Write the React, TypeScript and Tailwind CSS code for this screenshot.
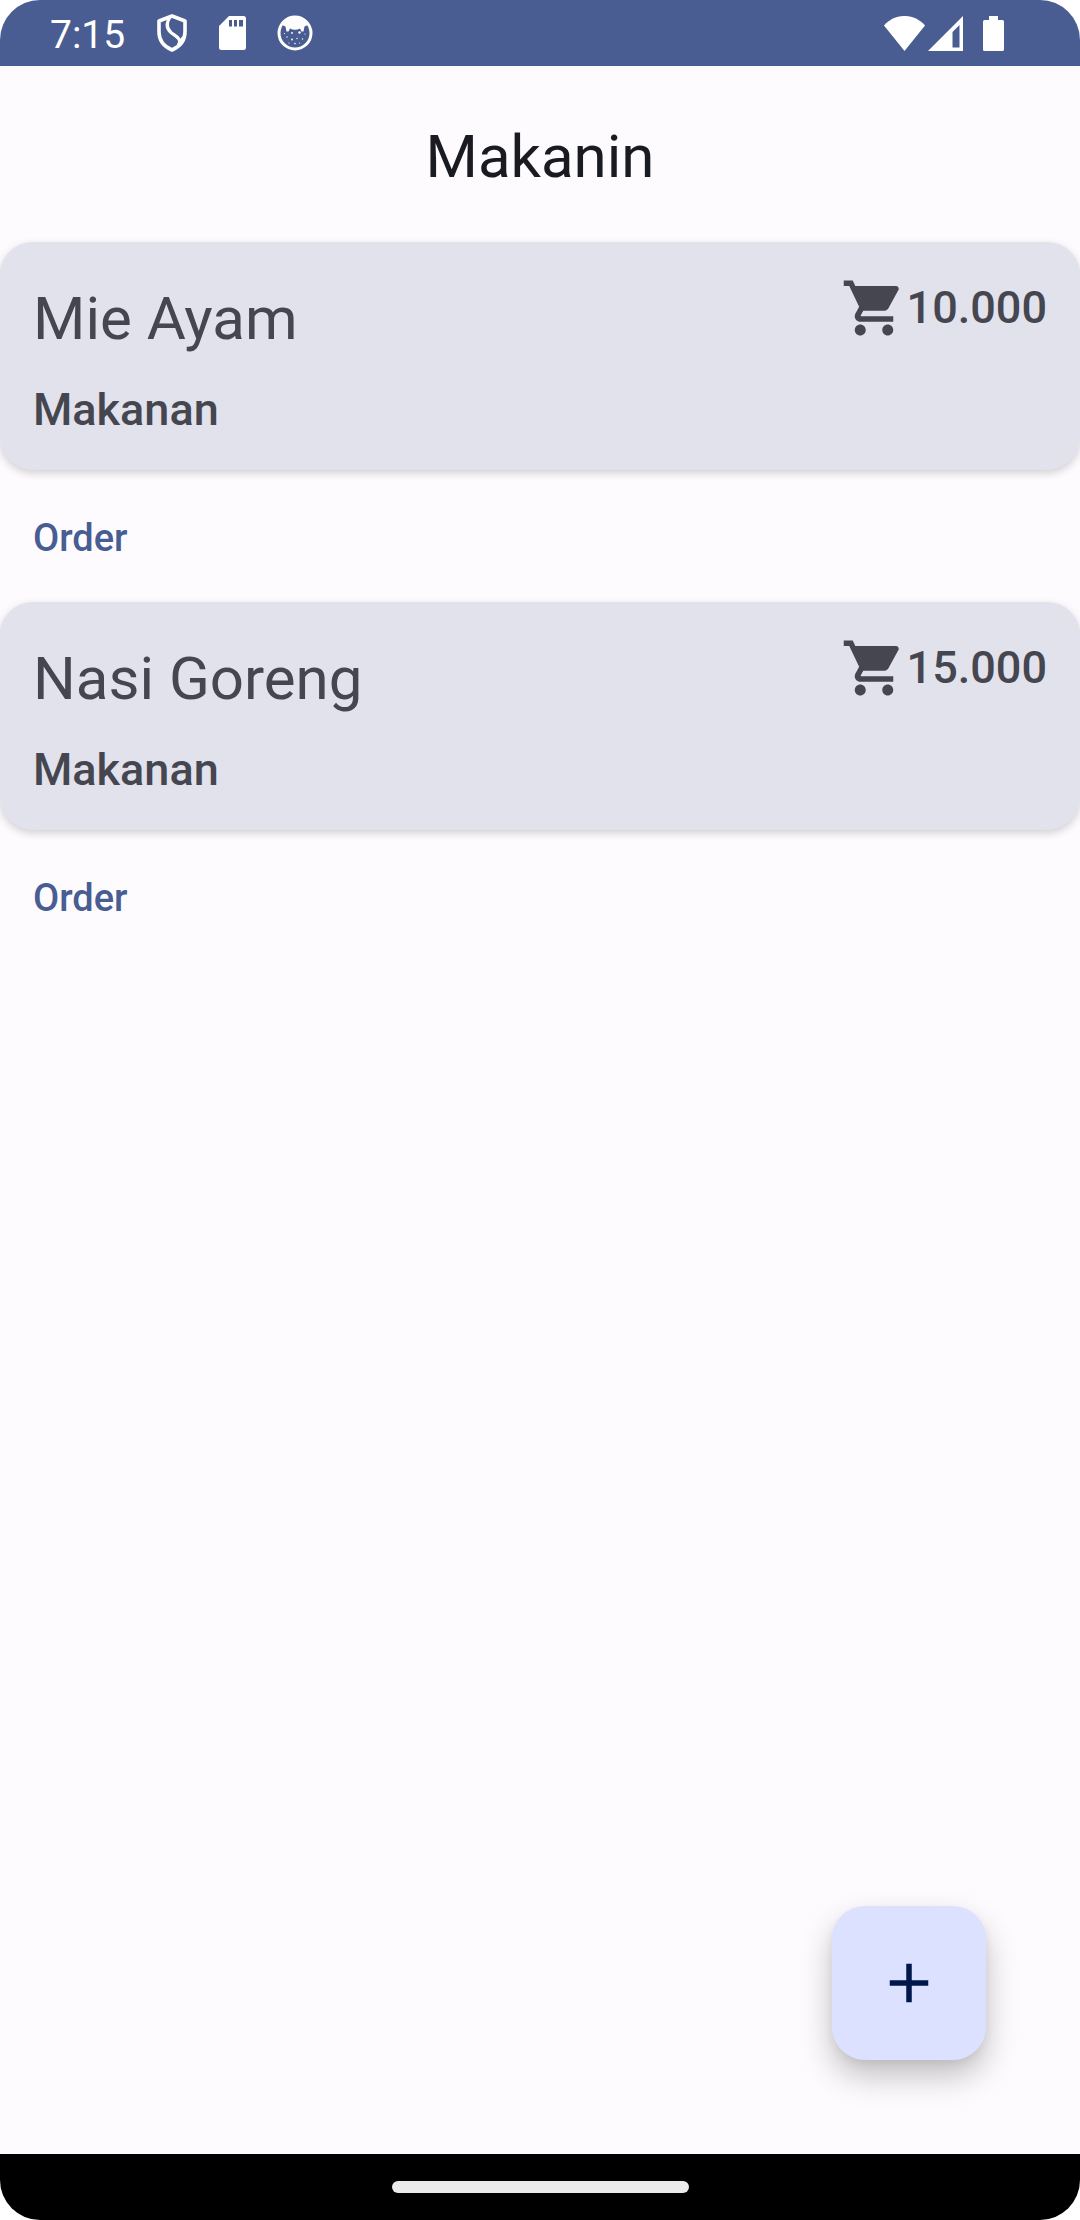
type MenuItem = { name: string; category: string; price: string };

const items: MenuItem[] = [
  { name: "Mie Ayam", category: "Makanan", price: "10.000" },
  { name: "Nasi Goreng", category: "Makanan", price: "15.000" },
];

function ShieldIcon() {
  return (
    <svg className="h-[38px] w-8" viewBox="0 0 32 38" fill="none" stroke="currentColor" strokeWidth="3.600" strokeLinejoin="round" aria-hidden="true">
      <path d="M16 2 29 7V18C29 26 24 32.500 16 36 8 32.500 3 26 3 18V7Z" />
      <path d="M14 3C9.500 10 10.500 14.500 15 18.500 20 22.500 26.500 25 22.500 31" strokeWidth="3.200" />
      <path d="M27.500 23 22 32" strokeWidth="3.200" />
    </svg>
  );
}

function SdCardIcon() {
  return (
    <svg className="h-[34px] w-[27px]" viewBox="0 0 27 34" fill="currentColor" aria-hidden="true">
      <path fillRule="evenodd" d="M10 0H24.500A2.500 2.500 0 0 1 27 2.500V31.500A2.500 2.500 0 0 1 24.500 34H2.500A2.500 2.500 0 0 1 0 31.500V10ZM10 4V10.500H13V4ZM15 4V10.500H18V4ZM20 4V10.500H24V4Z" />
    </svg>
  );
}

function FaceIcon() {
  return (
    <svg className="size-9" viewBox="0 0 36 36" fill="currentColor" aria-hidden="true">
      <circle cx="18" cy="18" r="16" fill="none" stroke="currentColor" strokeWidth="3" />
      <path d="M5 10C8 4.500 13 2 18 2S28 4.500 31 10L27.500 11.500 26.500 16.500H24.500L23 13.500C20 15.200 16 15.200 13 13.500L11.500 16.500H9.500L8.500 11.500Z" />
      <g>
        <circle cx="15" cy="18" r=".9" />
        <circle cx="22.500" cy="17.500" r="1.200" />
        <circle cx="7.500" cy="18.500" r=".6" />
        <circle cx="28" cy="19" r=".6" />
        <circle cx="10" cy="22" r=".7" />
        <circle cx="15" cy="24.500" r=".9" />
        <circle cx="20" cy="23.500" r=".7" />
        <circle cx="25.500" cy="24" r=".7" />
        <circle cx="18" cy="28.500" r=".8" />
        <circle cx="22.500" cy="28" r=".6" />
        <circle cx="12" cy="28" r=".6" />
      </g>
    </svg>
  );
}

function WifiIcon() {
  return (
    <svg className="h-[35px] w-[41px]" viewBox="0 0 41 35" fill="currentColor" aria-hidden="true">
      <path d="M0 9.500C11-3.200 30-3.200 41 9.500L20.500 35Z" />
    </svg>
  );
}

function SignalIcon() {
  return (
    <svg className="size-[35px]" viewBox="0 0 35 35" fill="currentColor" aria-hidden="true">
      <path fillRule="evenodd" d="M35 0V35H0ZM31.500 9 24.500 16V31.500H31.500Z" />
    </svg>
  );
}

function BatteryIcon() {
  return (
    <svg className="h-[35px] w-[21px]" viewBox="0 0 21 35" fill="currentColor" aria-hidden="true">
      <path d="M6 0H15V4H19.500A1.500 1.500 0 0 1 21 5.500V33.500A1.500 1.500 0 0 1 19.500 35H1.500A1.500 1.500 0 0 1 0 33.500V5.500A1.500 1.500 0 0 1 1.500 4H6Z" />
    </svg>
  );
}

function CartIcon() {
  return (
    <svg className="size-[66px]" viewBox="0 0 24 24" fill="currentColor" aria-hidden="true">
      <path d="M7 18c-1.100 0-1.990.9-1.990 2S5.900 22 7 22s2-.9 2-2-.9-2-2-2zM1 2v2h2l3.600 7.590-1.350 2.450c-.16.280-.25.610-.25.960 0 1.100.9 2 2 2h12v-2H7.420c-.14 0-.25-.11-.25-.25l.03-.12.9-1.630h7.450c.75 0 1.410-.41 1.750-1.030l3.580-6.490c.08-.14.12-.31.120-.48 0-.55-.45-1-1-1H5.210l-.94-2H1zm16 16c-1.100 0-1.990.9-1.990 2s.89 2 1.990 2 2-.9 2-2-.9-2-2-2z" />
    </svg>
  );
}

function StatusBar() {
  return (
    <div className="flex h-[66px] items-center justify-between bg-[#4a5d92] pr-[76px] pl-[50px] text-white">
      <div className="flex items-center">
        <time className="mr-[31px] pt-1 text-[39px] leading-none">7:15</time>
        <div className="flex items-center gap-[31px]">
          <ShieldIcon />
          <SdCardIcon />
          <FaceIcon />
        </div>
      </div>
      <div className="flex items-center">
        <WifiIcon />
        <span className="ml-[3px] flex gap-5">
          <SignalIcon />
          <BatteryIcon />
        </span>
      </div>
    </div>
  );
}

function MenuEntry({ item }: { item: MenuItem }) {
  return (
    <li>
      <article className="flex items-start justify-between rounded-[33px] bg-[#e1e2ec] p-[33px] text-[#45464f] shadow-[0_3px_8px_rgba(0,0,0,0.18)]">
        <div>
          <h2 className="text-[60px] leading-[88px]">{item.name}</h2>
          <p className="mt-5 text-[45px] leading-[54px] font-medium">{item.category}</p>
        </div>
        <p className="flex items-center text-[45px] leading-[64px] font-medium">
          <CartIcon />
          {item.price}
        </p>
      </article>
      <button type="button" className="h-[132px] px-[33px] pt-1 text-[38px] font-medium text-[#485d92]">
        Order
      </button>
    </li>
  );
}

export default function App() {
  return (
    <div className="bg-white font-['Roboto',sans-serif]">
      <div className="relative flex min-h-screen flex-col overflow-hidden rounded-[40px] bg-[#fefbff]">
        <StatusBar />
        <header className="flex h-[176px] items-center justify-center pt-1">
          <h1 className="text-[60px] leading-[77px] text-[#1a1b21]">Makanin</h1>
        </header>
        <main className="flex-1">
          <ul>
            {items.map((item) => (
              <MenuEntry key={item.name} item={item} />
            ))}
          </ul>
        </main>
        <button
          type="button"
          aria-label="Add"
          className="absolute right-[94px] bottom-[160px] flex size-[154px] items-center justify-center rounded-[33px] bg-[#dbe1ff] text-[#00174b] shadow-[0_16px_32px_rgba(0,0,0,0.24),0_4px_10px_rgba(0,0,0,0.06)]"
        >
          <svg className="size-[66px]" viewBox="0 0 24 24" fill="currentColor" aria-hidden="true">
            <path d="M19 13h-6v6h-2v-6H5v-2h6V5h2v6h6v2z" />
          </svg>
        </button>
        <footer className="flex h-[66px] items-center justify-center bg-black">
          <div className="h-3 w-[297px] rounded-full bg-[#ebebeb]" />
        </footer>
      </div>
    </div>
  );
}
